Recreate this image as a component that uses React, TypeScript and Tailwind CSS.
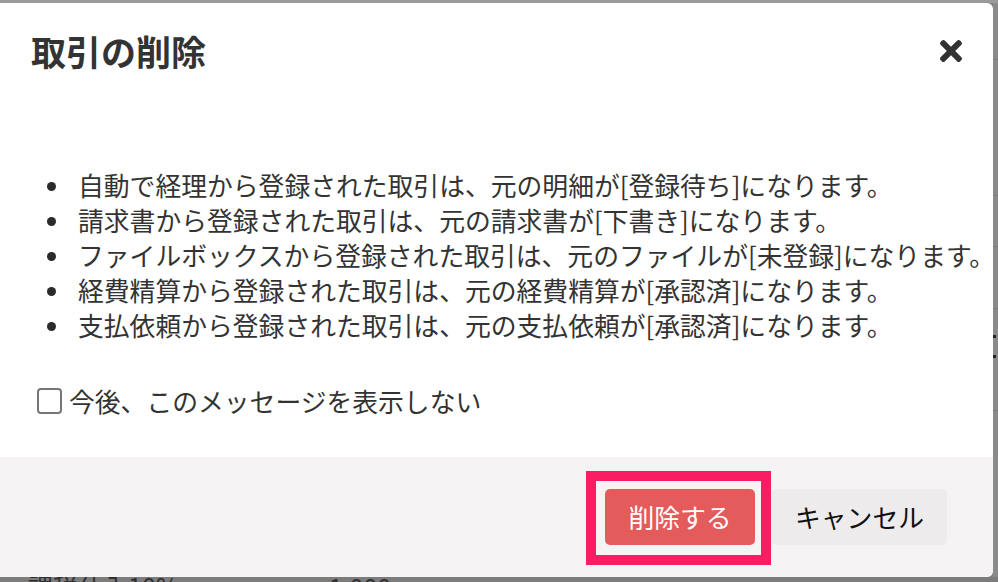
import { FaTimes } from 'react-icons/fa'

const items = [
  '自動で経理から登録された取引は、元の明細が[登録待ち]になります。',
  '請求書から登録された取引は、元の請求書が[下書き]になります。',
  'ファイルボックスから登録された取引は、元のファイルが[未登録]になります。',
  '経費精算から登録された取引は、元の経費精算が[承認済]になります。',
  '支払依頼から登録された取引は、元の支払依頼が[承認済]になります。',
]

const App = () => {
  return (
    <div className="flex h-[582px] w-[998px] flex-col overflow-hidden bg-[#808080] font-['Noto_Sans_CJK_JP',sans-serif] text-[#333333]">
      <div className="h-[3px] bg-[#9a9a9a]" />
      <div className="flex">
        <div className="flex h-[574px] w-[993px] flex-col rounded-r-[6px] bg-white">
          <div className="flex items-center justify-between pl-[31px] pr-[31px] pt-[28px]">
            <h2 className="text-[35px] font-bold leading-[40px]">取引の削除</h2>
            <FaTimes className="h-[32px] w-[22px]" />
          </div>

          <div className="flex-1">
            <ul className="mt-[96px] text-[25.8px] leading-[35px]">
              {items.map((t) => (
                <li key={t} className="flex items-start whitespace-nowrap pl-[47px]">
                  <span className="mr-[22px] mt-[15px] block h-[9px] w-[9px] shrink-0 rounded-full bg-[#2b2b2b]" />
                  <span>{t}</span>
                </li>
              ))}
            </ul>

            <label className="mt-[41px] flex items-center pl-[37px] text-[25.8px] leading-[35px]">
              <span className="mr-[7px] block h-[26px] w-[25px] rounded-[4px] border-2 border-[#767676] bg-white" />
              今後、このメッセージを表示しない
            </label>
          </div>

          <div className="flex h-[120px] items-center justify-end gap-[17px] rounded-br-[6px] bg-[#f5f3f4] pr-[46px]">
            <div className="relative">
              <div className="pointer-events-none absolute -bottom-[20px] -left-[19px] -right-[16px] -top-[18px] border-[10px] border-[#fa1d64]" />
              <button className="flex h-[56px] w-[150px] items-center justify-center rounded-[5px] bg-[#e45b5b] text-[25.8px] text-white">
                削除する
              </button>
            </div>
            <button className="flex h-[56px] w-[175px] items-center justify-center rounded-[5px] bg-[#edebec] text-[25.8px] text-[#111111]">
              キャンセル
            </button>
          </div>
        </div>
        <div className="flex flex-1 flex-col bg-[#8a8a8a]">
          <div className="mt-[56px] h-px bg-[#7a7a7a]" />
          <div className="mt-[135px] h-px bg-[#7a7a7a]" />
          <div className="mt-[50px] h-px bg-[#7a7a7a]" />
          <div className="mt-[61px] h-px bg-[#7a7a7a]" />
          <div className="mt-[26px] h-[3px] w-[3px] bg-[#222]" />
          <div className="mt-[17px] h-[3px] w-[3px] bg-[#222]" />
          <div className="mt-[52px] h-px bg-[#7a7a7a]" />
        </div>
      </div>
      <div className="flex h-[5px] overflow-hidden bg-[#7c7c7c] text-[25px] leading-[25px] text-[#2e2e2e]">
        <span className="-mt-[3px] ml-[28px]">課税仕入10%</span>
        <span className="-mt-[3px] ml-[150px]">1,000</span>
      </div>
    </div>
  )
}

export default App
